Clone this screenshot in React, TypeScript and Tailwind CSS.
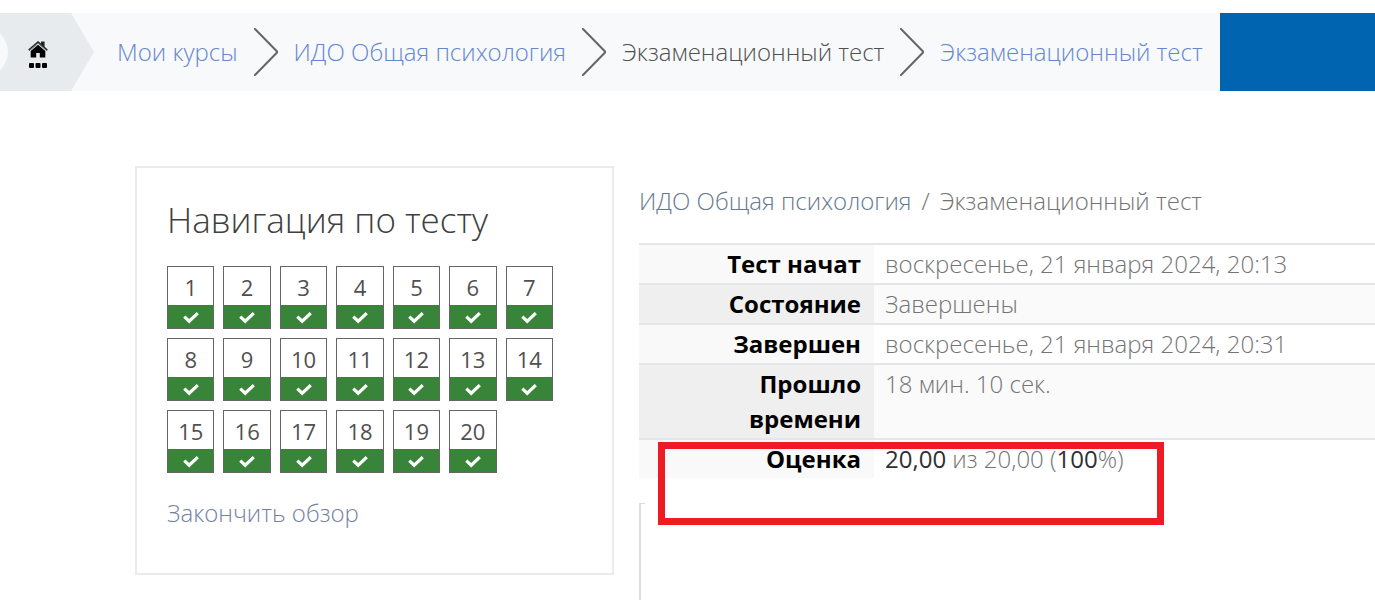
const questions = Array.from({ length: 20 }, (_, i) => i + 1);

function Chevron() {
  return (
    <svg className="h-12 w-6 shrink-0" viewBox="0 0 24 48" fill="none" stroke="#666" strokeWidth="2" strokeLinecap="round" aria-hidden="true">
      <path d="M1 1 L23.5 24 L1 47" />
    </svg>
  );
}

function CheckIcon() {
  return (
    <svg className="h-4 w-4" viewBox="0 0 16 16" fill="none" stroke="#fff" strokeWidth="3.2" aria-hidden="true">
      <path d="M1.3 7.6 L6.2 12.2 L14.8 4.2" />
    </svg>
  );
}

function HomeIcon() {
  return (
    <svg className="h-7 w-5" viewBox="0 0 20 28" aria-hidden="true">
      <path d="M0.2 8.5 L10 0 L13 2.6 V0.6 H16.6 V5.8 L19.8 8.5 L18.6 9.9 L10 2.6 L1.4 9.9 Z" fill="#222" />
      <path d="M10 3.8 L17.3 10 V16.4 H11.8 V12 H8.2 V16.4 H2.7 V10 Z" fill="#000" />
      <path d="M1.4 9.4 L10 2 L18.6 9.4" fill="none" stroke="#8b8b8b" strokeWidth="0.8" />
      <rect x="1" y="22" width="5" height="5" rx="1" />
      <rect x="7.5" y="22" width="5" height="5" rx="1" />
      <rect x="14" y="22" width="5" height="5" rx="1" />
    </svg>
  );
}

function TopTrail() {
  return (
    <header className="mt-[13px] flex h-[78px] bg-[#f8f9fb]">
      <a href="#home" aria-label="В начало" className="relative block w-[94px] shrink-0">
        <svg className="h-[78px] w-[94px]" viewBox="0 0 94 78" aria-hidden="true">
          <path d="M0 0 H71 L94 39 L71 78 H0 Z" fill="#e8ebed" />
          <circle cx="-17" cy="39" r="25" fill="#f8f9fb" />
        </svg>
        <span className="absolute top-7 left-7">
          <HomeIcon />
        </span>
      </a>
      <nav aria-label="Путь" className="flex grow items-center gap-4 pl-[23px] text-2xl leading-9 whitespace-nowrap text-[#6487cf]">
        <a href="#courses">Мои курсы</a>
        <Chevron />
        <a href="#course">ИДО Общая психология</a>
        <Chevron />
        <span className="text-[#505050]">Экзаменационный тест</span>
        <Chevron />
        <a href="#quiz">Экзаменационный тест</a>
      </nav>
      <div className="w-[155px] shrink-0 bg-[#0064b1]" />
    </header>
  );
}

function QuizNavigation() {
  return (
    <aside className="w-[479px] shrink-0 border-2 border-[#ebebeb] px-[30px] pt-[26px] pb-[42px]">
      <h2 className="text-[35px] leading-[52px] text-[#404040]">Навигация по тесту</h2>
      <div className="mt-5 grid w-[386px] grid-cols-7 gap-[9px]">
        {questions.map((n) => (
          <a key={n} href={`#question-${n}`} className="flex h-[63px] flex-col border border-[#666] text-center">
            <span className="h-[38px] text-[22px] leading-10 font-normal text-[#505050]">{n}</span>
            <span className="flex grow items-center justify-center bg-[#38853a]">
              <CheckIcon />
            </span>
          </a>
        ))}
      </div>
      <a href="#finish" className="mt-[22px] block text-2xl leading-9 text-[#7481a2]">
        Закончить обзор
      </a>
    </aside>
  );
}

const rows = [
  { label: "Тест начат", value: "воскресенье, 21 января 2024, 20:13" },
  { label: "Состояние", value: "Завершены" },
  { label: "Завершен", value: "воскресенье, 21 января 2024, 20:31" },
  { label: "Прошло времени", value: "18 мин. 10 сек." },
];

function Summary() {
  return (
    <div className="relative">
      <table className="w-full border-collapse text-2xl leading-[35px] text-[#747474]">
        <tbody>
          {rows.map((r) => (
            <tr key={r.label} className="group border-t-2 border-[#e4e7e9] even:bg-[#fafafa]">
              <th scope="row" className="w-[235px] bg-[#f9f9f9] pt-px pr-[13px] pb-[2px] pl-20 text-right align-top font-bold text-black group-even:bg-[#efefef]">
                {r.label}
              </th>
              <td className="pt-px pb-[2px] pl-[11px] align-top">{r.value}</td>
            </tr>
          ))}
          <tr className="border-t-2 border-[#e4e7e9]">
            <th scope="row" className="bg-[#f9f9f9] pt-px pr-[13px] pb-[2px] text-right align-top font-bold text-black">
              Оценка
            </th>
            <td className="pt-px pb-[2px] pl-[11px] align-top">
              <b className="font-normal text-[#303030]">20,00</b> из 20,00 (<b className="font-normal text-[#303030]">100</b>%)
            </td>
          </tr>
        </tbody>
      </table>
      <div className="pointer-events-none absolute top-[199px] left-[19px] h-[83px] w-[506px] border-[7px] border-[#ed1c24]" />
    </div>
  );
}

export default function App() {
  return (
    <div className="flow-root h-screen overflow-hidden bg-white font-['Open_Sans','Noto_Sans',sans-serif] font-light">
      <TopTrail />
      <div className="mt-[75px] flex items-start gap-[25px] pl-[135px]">
        <QuizNavigation />
        <main className="min-w-0 grow">
          <nav aria-label="Страница" className="mt-[17px] mb-6 flex gap-[10px] text-2xl leading-9 whitespace-nowrap">
            <a href="#course" className="text-[#65798f]">ИДО Общая психология</a>
            <span className="text-[#747474]">/</span>
            <span className="text-[#747474]">Экзаменационный тест</span>
          </nav>
          <Summary />
          <section aria-label="Вопросы" className="mt-[25px] h-40 border-l-2 border-[#dcdce4]">
            <div className="h-px w-1 bg-[#dcdce4]" />
          </section>
        </main>
      </div>
    </div>
  );
}
